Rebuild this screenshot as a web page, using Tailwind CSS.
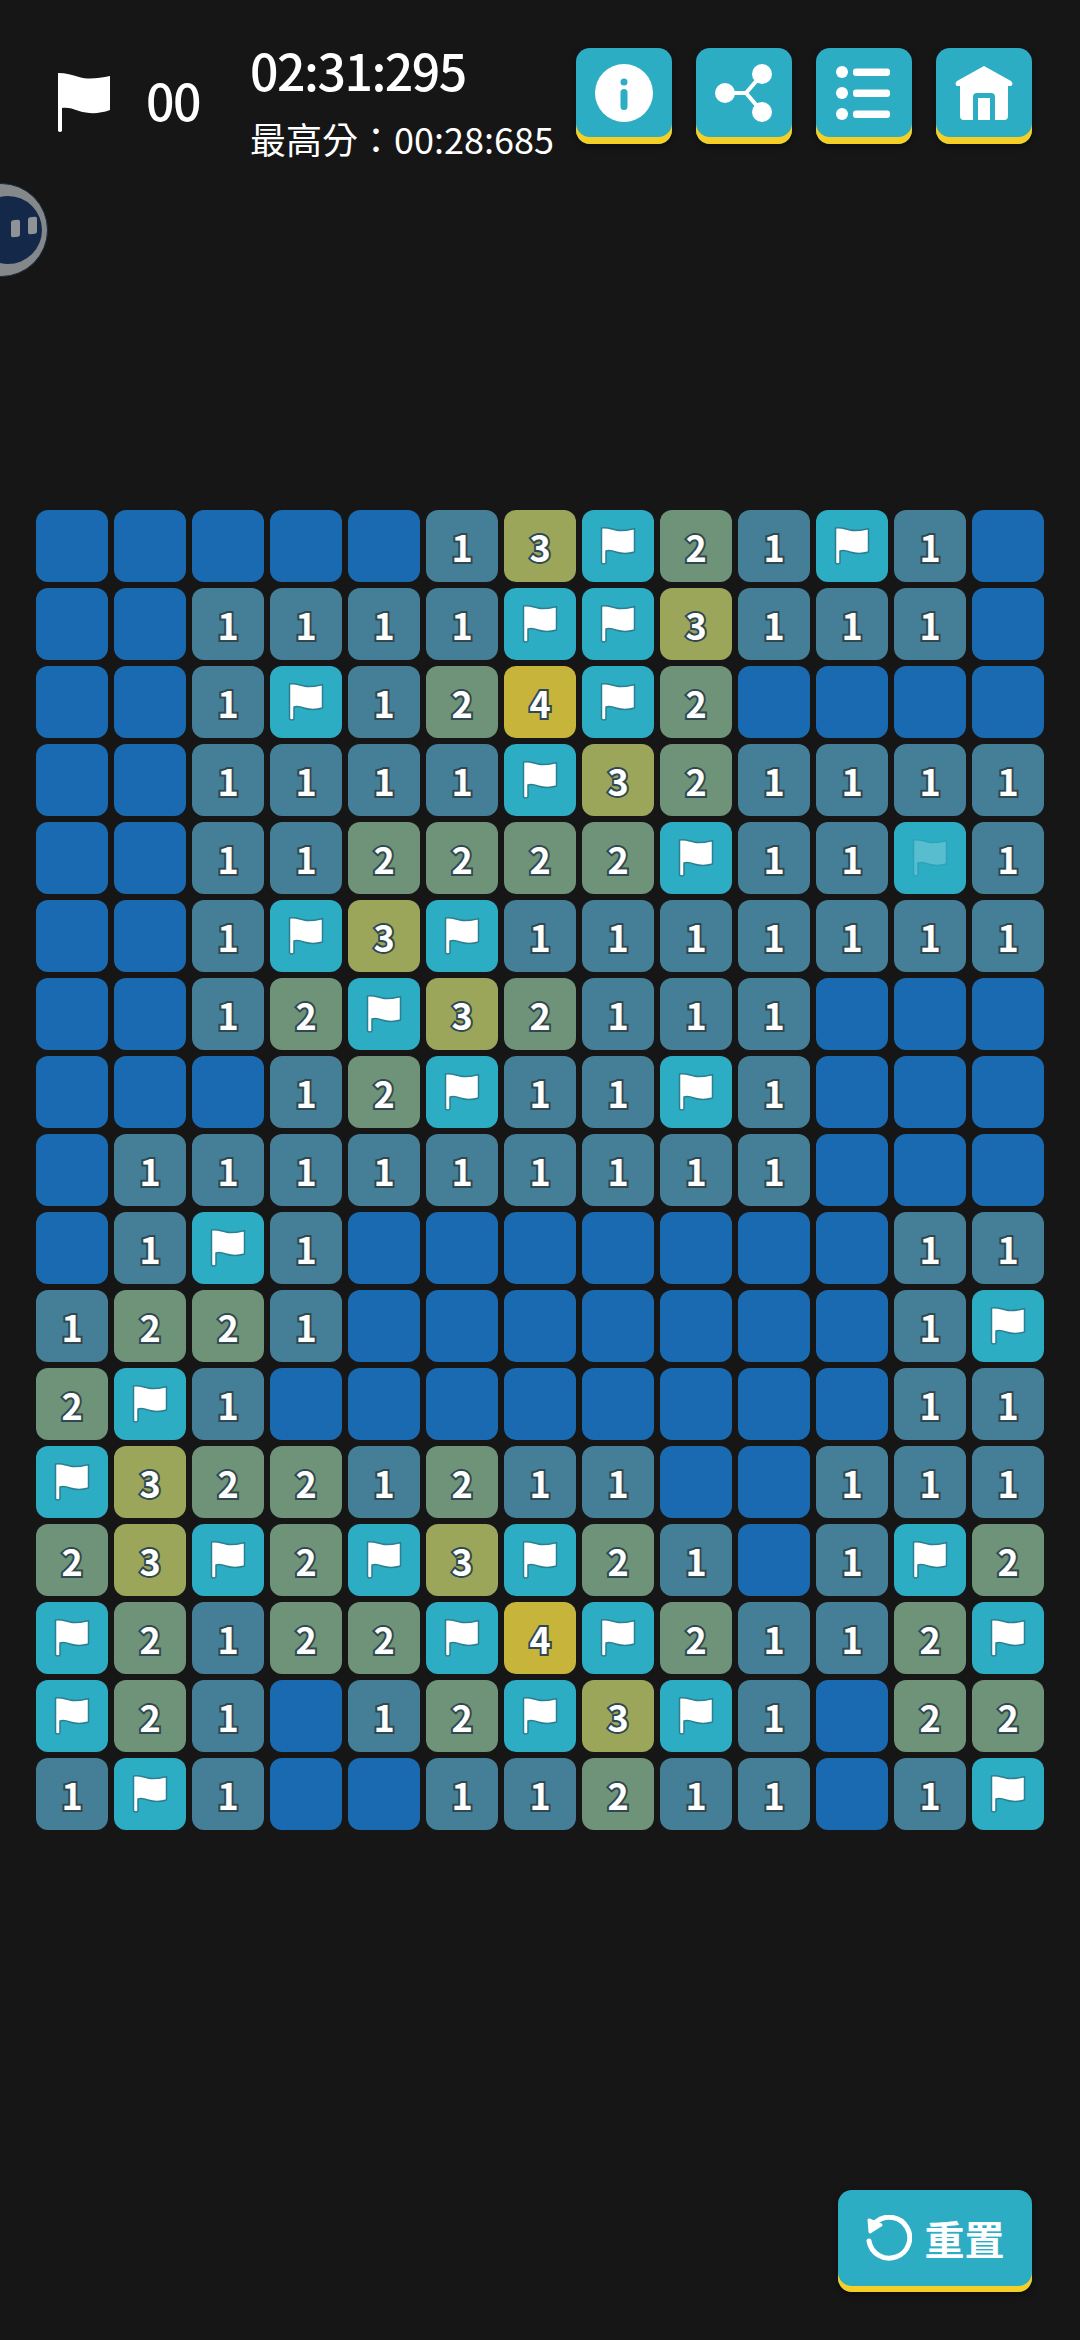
<!DOCTYPE html>
<html lang="zh-TW">
  <head>
    <meta charset="UTF-8" />
    <meta name="viewport" content="width=device-width, initial-scale=1.0" />
    <title>Minesweeper</title>
    <script src="https://cdn.jsdelivr.net/npm/@tailwindcss/browser@4"></script>
  </head>
  <body class="relative w-[1080px] h-[2340px] overflow-hidden bg-[#161616] text-white font-['Noto_Sans_CJK_TC','Noto_Sans',sans-serif]">
    <!-- floating helper, half off the screen -->
    <div class="absolute left-[-46px] top-[183px] w-[94px] h-[94px] rounded-full bg-[#84888b] border border-[#1a2a3d] overflow-hidden">
      <div class="absolute left-[19px] top-[12px] w-[68px] h-[68px] rounded-full bg-[#14294a]"></div>
      <div class="absolute left-[56px] top-[36px] w-[9px] h-[17px] rounded-[2px] bg-[#8f9396] -skew-y-6"></div>
      <div class="absolute left-[73px] top-[33px] w-[9px] h-[17px] rounded-[2px] bg-[#8f9396] -skew-y-6"></div>
    </div>

    <header class="flex items-start h-[510px] pt-[48px] pr-[48px]">
      <svg class="w-[54px] h-[60px] ml-[57px] mt-[25px] shrink-0" viewBox="0 0 54 60" fill="#fff">
        <path d="M1 0 C9 0 15 2 22 4 C32 7 42 5 53 3 V37 C42 41 32 41 22 38 C15 35 9 34 5 35 V58 Q3 60 1 58 Z" />
      </svg>
      <div class="ml-[35px] mt-[21px] w-[104px] text-[50px] leading-[60px] tracking-[-1.5px] font-medium">00</div>
      <div class="w-[320px] shrink-0">
        <div class="text-[50px] leading-[50px] h-[50px] tracking-[-1.5px] font-medium -mt-[4px]">02:31:295</div>
        <div class="text-[36px] leading-[50px] mt-[19px] whitespace-nowrap">最高分：00:28:685</div>
      </div>
      <div class="flex gap-[24px] ml-auto">
        <button class="flex items-center justify-center w-[96px] h-[96px] pb-[7px] rounded-[14px] bg-[#2dadc4] shadow-[inset_0_-7px_0_#f5cf26,0_3px_6px_rgba(0,0,0,0.4)]">
          <svg class="w-[58px] h-[58px]" viewBox="0 0 58 58">
            <circle cx="29" cy="29" r="29" fill="#fff" />
            <circle cx="29" cy="18" r="3.5" fill="#2dadc4" />
            <rect x="25.5" y="25" width="7" height="21" rx="3.5" fill="#2dadc4" />
          </svg>
        </button>
        <button class="flex items-center justify-center w-[96px] h-[96px] pb-[7px] rounded-[14px] bg-[#2dadc4] shadow-[inset_0_-7px_0_#f5cf26,0_3px_6px_rgba(0,0,0,0.4)]">
          <svg class="w-[58px] h-[58px]" viewBox="0 0 58 58" fill="#fff">
            <path d="M10 29 H31 L48 9 M31 29 L48 49" fill="none" stroke="#fff" stroke-width="4" />
            <circle cx="10" cy="29" r="10" />
            <circle cx="47" cy="10" r="10" />
            <circle cx="47" cy="48" r="10" />
          </svg>
        </button>
        <button class="flex items-center justify-center w-[96px] h-[96px] pb-[7px] rounded-[14px] bg-[#2dadc4] shadow-[inset_0_-7px_0_#f5cf26,0_3px_6px_rgba(0,0,0,0.4)]">
          <svg class="w-[56px] h-[54px]" viewBox="0 0 56 54" fill="#fff">
            <circle cx="6" cy="6" r="6" /><rect x="17" y="2.5" width="37" height="7.5" rx="3" />
            <circle cx="6" cy="27" r="6" /><rect x="17" y="23.5" width="37" height="7.5" rx="3" />
            <circle cx="6" cy="48" r="6" /><rect x="17" y="44.5" width="37" height="7.5" rx="3" />
          </svg>
        </button>
        <button class="flex items-center justify-center w-[96px] h-[96px] pb-[7px] rounded-[14px] bg-[#2dadc4] shadow-[inset_0_-7px_0_#f5cf26,0_3px_6px_rgba(0,0,0,0.4)]">
          <svg class="w-[58px] h-[54px]" viewBox="0 0 58 54" fill="#fff">
            <path d="M29 0 L56 15 Q59 18 56 20 H53 V50 Q53 54 49 54 H40 V31 Q40 27 36 27 H22 Q18 27 18 31 V54 H9 Q5 54 5 50 V20 H2 Q-1 18 2 15 Z" />
            <rect x="23" y="32" width="12" height="22" />
          </svg>
        </button>
      </div>
    </header>

    <main id="board" class="grid grid-cols-[repeat(13,72px)] auto-rows-[72px] gap-[6px] ml-[36px]"></main>

    <footer class="flex justify-end mt-[360px] pr-[48px]">
      <button class="flex items-center justify-center gap-[13px] w-[194px] h-[102px] pb-[6px] rounded-[14px] bg-[#2dadc4] shadow-[inset_0_-6px_0_#f5cf26,0_3px_6px_rgba(0,0,0,0.4)]">
        <svg class="w-[46px] h-[46px]" viewBox="0 0 46 46" fill="none" stroke="#fff" stroke-width="5" stroke-linecap="round">
          <path d="M10 7 A20.5 20.5 0 1 1 3 26" />
          <path d="M3 5 L4 17 L15 10 Z" fill="#fff" stroke-width="3" stroke-linejoin="round" />
        </svg>
        <span class="text-[40px] leading-[50px] font-bold">重置</span>
      </button>
    </footer>

    <script>
      const layout = [
        '.....13F21F1.',
        '..1111FF3111.',
        '..1F124F2....',
        '..1111F321111',
        '..112222F11f1',
        '..1F3F1111111',
        '..12F32111...',
        '...12F11F1...',
        '.111111111...',
        '.1F1.......11',
        '1221.......1F',
        '2F1........11',
        'F3221211..111',
        '23F2F3F21.1F2',
        'F2122F4F2112F',
        'F21.12F3F1.22',
        '1F1..11211.1F'
      ];
      const bg = {
        '.': 'bg-[#1a6ab2]',
        1: 'bg-[#457f97]',
        2: 'bg-[#6f9378]',
        3: 'bg-[#9ca65a]',
        4: 'bg-[#c6b53a]',
        F: 'bg-[#2dadc4]',
        f: 'bg-[#2dadc4]'
      };
      const flag = (cls) => `<svg class="w-[38px] h-[40px] ${cls}" viewBox="0 0 38 40">
        <path d="M2.5 2 C8 1 12 3 17 4 C24 5.5 29 4 35.5 2.5 V26 C29 28 23 28 17 26 C13 24.5 10 24 7 25 V37 Q4.75 39 2.5 37 Z" fill="#fff" stroke="#2a7f90" stroke-width="1.5" stroke-linejoin="round" />
      </svg>`;

      const board = document.querySelector('#board');
      layout.forEach((row) => {
        [...row].forEach((c) => {
          const cell = document.createElement('div');
          cell.className = `flex items-center justify-center rounded-[12px] ${bg[c]}`;
          if (c === 'F') cell.innerHTML = flag('');
          if (c === 'f') cell.innerHTML = flag('opacity-20');
          if (c >= '1' && c <= '4') {
            cell.innerHTML = `<span class="text-[36px] leading-none font-semibold text-white [-webkit-text-stroke:4px_#30484f] [paint-order:stroke_fill]">${c}</span>`;
          }
          board.appendChild(cell);
        });
      });
    </script>
  </body>
</html>
